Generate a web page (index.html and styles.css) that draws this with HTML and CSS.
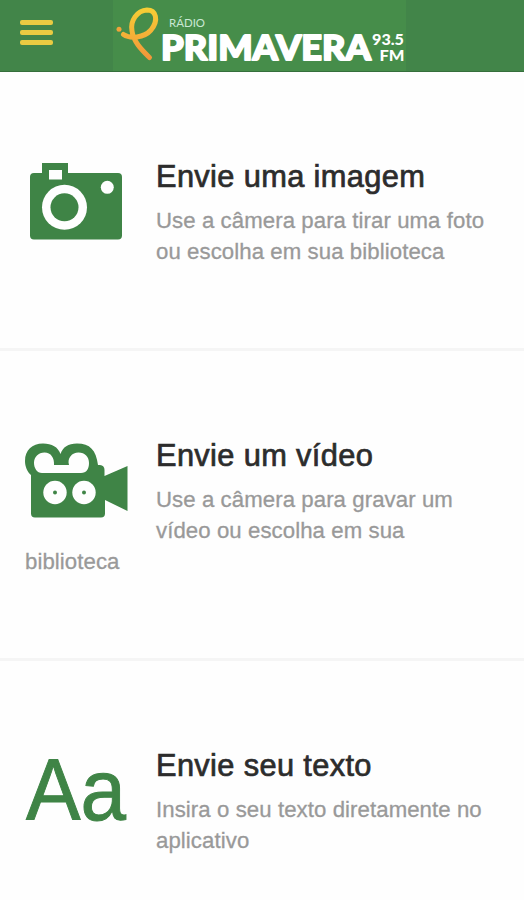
FILE: index.html
```
<!DOCTYPE html>
<html lang="pt-BR">
<head>
    <meta charset="UTF-8">
    <meta name="viewport" content="width=device-width, initial-scale=1.0">
    <title>Rádio Primavera 93.5 FM</title>
    <link rel="stylesheet" href="styles.css">
</head>
<body>
    <header class="header">
        <button class="menu" aria-label="Menu">
            <span></span>
            <span></span>
            <span></span>
        </button>
        <svg class="logo" viewBox="113 0 293 71" role="img" aria-label="Rádio Primavera 93.5 FM">
            <defs>
                <linearGradient id="ribbon" gradientUnits="userSpaceOnUse" x1="0" y1="8" x2="0" y2="60">
                    <stop offset="0" stop-color="#f6cf35"/>
                    <stop offset="1" stop-color="#f2943a"/>
                </linearGradient>
            </defs>
            <circle cx="119" cy="29.3" r="2.5" fill="#f0a23a"/>
            <path class="ribbon" d="M123.500 34.500C130 39 144 38 151 30C159 20 156 10 147 10C137 10.500 130 21 132 31C133.500 42 142 50 149.500 57.500"/>
            <text class="logo-small" x="169" y="26.500" textLength="36" lengthAdjust="spacingAndGlyphs">RÁDIO</text>
            <text class="logo-name" x="161" y="60" textLength="210" lengthAdjust="spacingAndGlyphs">PRIMAVERA</text>
            <text class="logo-freq" x="372" y="45" textLength="32" lengthAdjust="spacingAndGlyphs">93.5</text>
            <text class="logo-freq" x="379.500" y="60.500" textLength="25" lengthAdjust="spacingAndGlyphs">FM</text>
        </svg>
    </header>

    <main>
        <section class="item">
            <svg class="icon" viewBox="25 156 131 100">
                <path d="M42 173V163H68V173H118Q122 173 122 177V235.500Q122 239.500 118 239.500H34Q30 239.500 30 235.500V177Q30 173 34 173Z"/>
                <rect class="hole" x="49" y="170" width="13" height="9.500"/>
                <circle class="hole" cx="64.500" cy="207.300" r="22.500"/>
                <circle cx="64.500" cy="207.300" r="14"/>
                <circle class="hole" cx="107.300" cy="187.300" r="6.500"/>
            </svg>
            <h2>Envie uma imagem</h2>
            <p>Use a câmera para tirar uma foto ou escolha em sua biblioteca</p>
        </section>

        <section class="item">
            <svg class="icon" viewBox="25 435 131 100">
                <path d="M31 475C27 472 25 466 25 461C25 450 32 443.500 43 443.500C52 443.500 58 447 60.500 454C63 447 68 443.500 77 443.500C90 443.500 96 450 98 465H100Q104.500 465.500 104.500 470V476L127.500 466V511L105 500V513.500Q105 517.500 101 517.500H35Q31 517.500 31 513.500Z"/>
                <path class="hole" d="M44.500 452.500C51 452.500 54.500 458 54 465H69C67 458 72 452.500 78.500 452.500C85 452.500 89 457 89 463C89 469 86.500 473 81 473H42C37 473 34 468 34 463C34 457 38.500 452.500 44.500 452.500Z"/>
                <circle class="hole" cx="55" cy="492.500" r="11.700"/>
                <circle class="hole" cx="84" cy="492.500" r="11.700"/>
                <circle cx="55" cy="492.500" r="2"/>
                <circle cx="84" cy="492.500" r="2"/>
            </svg>
            <h2>Envie um vídeo</h2>
            <p>Use a câmera para gravar um vídeo ou escolha em sua biblioteca</p>
        </section>

        <section class="item">
            <svg class="icon" viewBox="25 745 131 100">
                <text class="letters" x="26" y="820" textLength="100" lengthAdjust="spacingAndGlyphs">Aa</text>
            </svg>
            <h2>Envie seu texto</h2>
            <p>Insira o seu texto diretamente no aplicativo</p>
        </section>
    </main>
</body>
</html>
```
FILE: styles.css
```
body {
    margin: 0;
    height: 900px;
    overflow: hidden;
    background: #fefefe;
    font-family: "Liberation Sans", Arial, sans-serif;
}

.header {
    display: flex;
    box-sizing: border-box;
    height: 72px;
    background: #428549;
    border-bottom: 1px solid #356f3c;
}

/* menu */
.menu {
    display: flex;
    flex-direction: column;
    gap: 5.500px;
    width: 113px;
    padding: 20px 60px 0 20px;
    border: none;
    background: none;
    cursor: pointer;
}

.menu span {
    height: 4.500px;
    border-radius: 2px;
    background: #e9cb42;
}

/* logo */
.logo {
    width: 293px;
    height: 71px;
    background: #468d4a;
}

.logo text {
    fill: #fff;
    font-family: Lato, sans-serif;
}

.ribbon {
    fill: none;
    stroke: url(#ribbon);
    stroke-width: 5;
    stroke-linecap: round;
}

.logo .logo-small {
    fill: #c9e8d4;
    font-size: 12px;
}

.logo .logo-name {
    font-size: 34px;
    font-weight: 900;
    stroke: #fff;
    stroke-width: 1.800;
    stroke-linejoin: round;
}

.logo .logo-freq {
    font-size: 15px;
    font-weight: 900;
}

/* envio */
.item {
    padding: 84px 25px 81px;
    border-bottom: 3px solid #f5f5f5;
}

.icon {
    float: left;
    width: 131px;
    height: 100px;
    overflow: visible;
    fill: #3f8446;
}

.icon .hole {
    fill: #fefefe;
}

.letters {
    font-size: 87px;
    stroke: #3f8446;
    stroke-width: 1;
}

.item h2 {
    margin: 1px 0 8px;
    font-size: 30.800px;
    font-weight: normal;
    line-height: 40px;
    letter-spacing: 0.350px;
    color: #2c2c2c;
    -webkit-text-stroke: 0.700px #2c2c2c;
}

.item p {
    margin: 0;
    font-size: 22.200px;
    line-height: 31px;
    letter-spacing: 0.080px;
    color: #999;
    -webkit-text-stroke: 0.300px #999;
}
```
